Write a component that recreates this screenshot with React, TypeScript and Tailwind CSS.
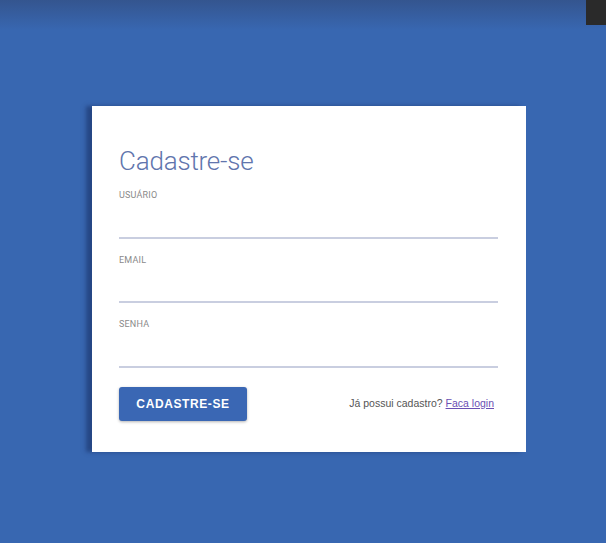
export default function App() {
  const fields = ["USUÁRIO", "EMAIL", "SENHA"];
  return (
    <div className="relative w-[606px] h-[543px] bg-[#3867b1] flex justify-center font-['Roboto',sans-serif] overflow-hidden">
      <div className="absolute inset-x-0 top-0 h-[30px] bg-gradient-to-b from-[#34558f] to-[#3867b1]" />
      <div className="absolute right-0 top-0 w-[20px] h-[25px] bg-[#2a2a2a]" />

      <div className="relative mt-[106px] ml-[12px] w-[434px] h-[346px] bg-white shadow-[-6px_0_4px_rgba(20,40,90,0.5)] px-[27px] pt-[40px]">
        <h1 className="text-[26px] leading-[30px] text-[#6175ad] font-light tracking-[-0.2px]">Cadastre-se</h1>

        <div className="mt-[13px] flex flex-col">
          {fields.map((f) => (
            <div key={f} className="h-[64.5px] flex flex-col">
              <span className="text-[9px] leading-[12px] text-[#8a8a8a] tracking-[0.2px]">{f}</span>
              <div className="mt-auto mb-[15px] w-[379px] h-[2px] bg-[#c9cee0]" />
            </div>
          ))}
        </div>

        <div className="mt-[4px] flex items-center justify-between w-[375px]">
          <button className="w-[128px] h-[34px] rounded-[3px] bg-[#3a67b4] text-white text-[12px] font-bold tracking-[0.6px] font-['Liberation_Sans',sans-serif] shadow-[0_1px_3px_rgba(0,0,0,0.3)]">
            CADASTRE-SE
          </button>
          <span className="text-[10.5px] text-[#555] font-['Liberation_Sans',sans-serif]">
            Já possui cadastro? <a className="text-[#6a4fb3] underline">Faca login</a>
          </span>
        </div>
      </div>
    </div>
  );
}
